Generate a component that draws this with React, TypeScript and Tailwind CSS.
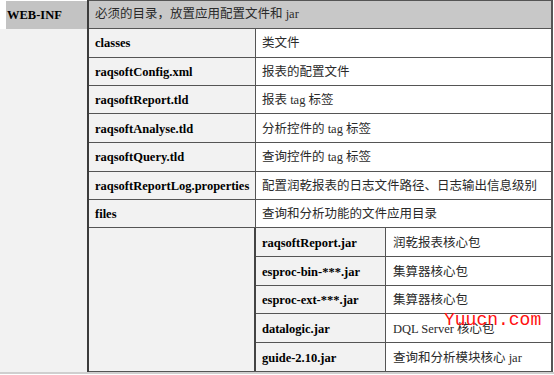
const rows: [string, string][] = [
  ['classes', '类文件'],
  ['raqsoftConfig.xml', '报表的配置文件'],
  ['raqsoftReport.tld', '报表 tag 标签'],
  ['raqsoftAnalyse.tld', '分析控件的 tag 标签'],
  ['raqsoftQuery.tld', '查询控件的 tag 标签'],
  ['raqsoftReportLog.properties', '配置润乾报表的日志文件路径、日志输出信息级别'],
  ['files', '查询和分析功能的文件应用目录'],
];

const jars: [string, string][] = [
  ['raqsoftReport.jar', '润乾报表核心包'],
  ['esproc-bin-***.jar', '集算器核心包'],
  ['esproc-ext-***.jar', '集算器核心包'],
  ['datalogic.jar', 'DQL Server 核心包'],
  ['guide-2.10.jar', '查询和分析模块核心 jar'],
];

// row heights incl. bottom border, header first (sum = 373)
const heights = ['h-[29px]', 'h-[29px]', 'h-[29px]', 'h-[28px]', 'h-[29px]', 'h-[29px]', 'h-[29px]', 'h-[28px]'];
const jarHeights = ['h-[29px]', 'h-[29px]', 'h-[28px]', 'h-[29px]', 'h-[28px]'];

const serif = "font-['Liberation_Serif','Noto_Sans_CJK_SC',serif]";
const cjk = "font-['Liberation_Serif','Noto_Sans_CJK_SC',sans-serif] text-[12.5px] text-[#2a2a2a]";
const bold = 'text-[12.5px] font-bold text-black';

export default function App() {
  return (
    <div className={`relative w-[554px] h-[375px] bg-white ${serif}`}>
      <div className="flex h-[374px] border-b-2 border-[#cfcfcf]">
        {/* left column */}
        <div className="w-[87px] flex flex-col bg-[#f2f2f2]">
          <div className="h-[29px] flex bg-white">
            <div className={`ml-[6px] mt-[1px] flex-1 bg-[#c3c3c3] flex items-center pl-[1px] ${bold}`}>
              WEB-INF
            </div>
          </div>
        </div>

        {/* right part */}
        <div className="flex-1 flex flex-col border-l-2 border-[#3c3c3c] mr-[1px]">
          <div className={`${heights[0]} flex items-center bg-[#c8c8c8] border-t border-b border-r-2 border-[#555] pl-[6px] ${cjk}`}>
            必须的目录，放置应用配置文件和 jar
          </div>
          {rows.map(([name, desc], i) => (
            <div key={name} className={`${heights[i + 1]} flex border-b border-[#555] border-r-2`}>
              <div className={`w-[167px] bg-[#f2f2f2] border-r border-[#555] flex items-center pl-[6px] pt-[2px] ${bold}`}>
                {name}
              </div>
              <div className={`flex-1 bg-white flex items-center pl-[6px] pt-[2px] ${cjk}`}>{desc}</div>
            </div>
          ))}
          <div className="flex-1 flex border-r-2 border-[#555]">
            <div className="w-[167px] bg-[#f2f2f2] border-r-2 border-[#444]" />
            <div className="flex-1 flex flex-col">
              {jars.map(([name, desc], i) => (
                <div key={name} className={`${jarHeights[i]} flex ${i < jars.length - 1 ? 'border-b border-[#555]' : ''}`}>
                  <div className={`w-[130px] bg-[#f2f2f2] border-r border-[#555] flex items-center pl-[6px] pt-[2px] ${bold}`}>
                    {name}
                  </div>
                  <div className={`flex-1 bg-white flex items-center pl-[7px] pt-[2px] ${cjk}`}>{desc}</div>
                </div>
              ))}
            </div>
          </div>
          <div className="h-[1px] bg-[#555]" />
        </div>
      </div>

      {/* watermark */}
      <div className="absolute left-[444px] top-[310px] font-['Liberation_Mono',monospace] text-[18px] leading-[20px] text-[#ff1010]">
        Yuucn.com
      </div>
    </div>
  );
}
